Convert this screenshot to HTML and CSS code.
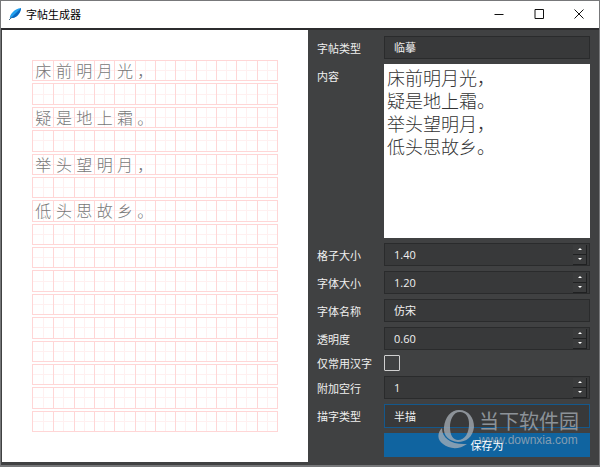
FILE: index.html
```html
<!DOCTYPE html>
<html lang="zh-CN">
<head>
    <meta charset="UTF-8">
    <meta name="viewport" content="width=device-width, initial-scale=1.0">
    <title>字帖生成器</title>
    <link rel="stylesheet" href="styles.css">
</head>
<body>
    <div class="window">
        <header class="titlebar">
            <svg class="logo" viewBox="0 0 14 14" width="14" height="14">
                <path d="M2 12 C1 8 6 2 13 1 C13 5 9 11 4 11 Z" fill="#22a0ee"/>
                <path d="M3 11 C6 8 10 4 13 1 C13 5 9 11 4 11 Z" fill="#0a67be"/>
                <path d="M1 13 L4 10" stroke="#4a6b88" stroke-width="1"/>
            </svg>
            <h1>字帖生成器</h1>
            <button class="win-btn" aria-label="最小化">
                <svg viewBox="0 0 10 10" width="10" height="10"><path d="M0.5 5.5H9.5"/></svg>
            </button>
            <button class="win-btn" aria-label="最大化">
                <svg viewBox="0 0 10 10" width="10" height="10"><path d="M1 0.5H9.5V9.5H1Z"/></svg>
            </button>
            <button class="win-btn" aria-label="关闭">
                <svg viewBox="0 0 10 10" width="10" height="10"><path d="M0.5 0.5L9.5 9.5M9.5 0.5L0.5 9.5"/></svg>
            </button>
        </header>

        <main class="main">
            <section class="sheet" id="sheet"></section>

            <form class="panel" id="form">
                <label for="type">字帖类型</label>
                <select id="type" class="field"><option>临摹</option></select>

                <label for="content" class="top">内容</label>
                <textarea id="content" spellcheck="false">床前明月光，
疑是地上霜。
举头望明月，
低头思故乡。</textarea>

                <label for="gridSize">格子大小</label>
                <div class="field spin">
                    <input type="number" id="gridSize" value="1.40" step="0.1">
                    <div class="arrows"><button type="button" class="up" aria-label="增加"></button><button type="button" class="down" aria-label="减少"></button></div>
                </div>

                <label for="fontSize">字体大小</label>
                <div class="field spin">
                    <input type="number" id="fontSize" value="1.20" step="0.1">
                    <div class="arrows"><button type="button" class="up" aria-label="增加"></button><button type="button" class="down" aria-label="减少"></button></div>
                </div>

                <label for="fontName">字体名称</label>
                <select id="fontName" class="field"><option>仿宋</option></select>

                <label for="opacity">透明度</label>
                <div class="field spin">
                    <input type="number" id="opacity" value="0.60" step="0.1">
                    <div class="arrows"><button type="button" class="up" aria-label="增加"></button><button type="button" class="down" aria-label="减少"></button></div>
                </div>

                <label for="common">仅常用汉字</label>
                <input type="checkbox" id="common" class="check">

                <label for="blank">附加空行</label>
                <div class="field spin">
                    <input type="number" id="blank" value="1">
                    <div class="arrows"><button type="button" class="up" aria-label="增加"></button><button type="button" class="down" aria-label="减少"></button></div>
                </div>

                <label for="trace">描字类型</label>
                <select id="trace" class="field active"><option>半描</option></select>

                <button type="button" class="save"><span>保存为</span></button>
            </form>
        </main>

        <div class="watermark">
            <svg viewBox="0 0 38 40" width="38" height="40">
                <path fill-rule="evenodd" d="M22 1 C32 1 37 9 37 18 C36 28 29 33 21 33 C12 32 6 27 7 18 C8 8 14 1 22 1 Z M23 3 C16 3 13 11 13 18 C13 26 16 31 21 31 C28 31 32 24 32 15 C32 8 29 3 23 3 Z"/>
                <path d="M5 19 C5 29 14 36 30 35 C22 41 12 40 6 35 C0 31 0 24 5 19 Z"/>
            </svg>
            <div>
                <div class="mark-name">当下软件园</div>
                <div class="mark-url">www.downxia.com</div>
            </div>
        </div>
    </div>

    <script>
        const ROWS = 16;
        const COLS = 12;
        const sheet = document.getElementById('sheet');
        const content = document.getElementById('content');
        const blank = document.getElementById('blank');

        // 每行文字后面附加空行
        function draw() {
            const lines = content.value.split('\n');
            const step = Number(blank.value) + 1;
            sheet.innerHTML = '';
            for (let r = 0; r < ROWS; r++) {
                const text = r % step === 0 ? (lines[r / step] || '') : '';
                const row = document.createElement('div');
                row.className = 'row';
                for (let c = 0; c < COLS; c++) {
                    const cell = document.createElement('span');
                    cell.className = 'cell';
                    cell.textContent = text[c] || '';
                    row.appendChild(cell);
                }
                sheet.appendChild(row);
            }
        }

        document.querySelectorAll('.spin').forEach((spin) => {
            const input = spin.querySelector('input');
            const change = (dir) => {
                const step = Number(input.step) || 1;
                const digits = input.step ? 2 : 0;
                input.value = Math.max(0, Number(input.value) + dir * step).toFixed(digits);
                draw();
            };
            spin.querySelector('.up').addEventListener('click', () => change(1));
            spin.querySelector('.down').addEventListener('click', () => change(-1));
        });

        content.addEventListener('input', draw);
        blank.addEventListener('input', draw);
        draw();
    </script>
</body>
</html>
```

FILE: styles.css
```css
* {
    box-sizing: border-box;
}
body {
    margin: 0;
    font-family: "Open Sans", "Noto Sans CJK SC", sans-serif;
    font-size: 11px;
    color: #f0f0f0;
    background-color: #404142;
}
button, input, select, textarea {
    font: inherit;
    color: inherit;
    margin: 0;
}
.window {
    position: relative;
    display: flex;
    flex-direction: column;
    height: 100vh;
    border: 1px solid #77787a;
    border-bottom-width: 2px;
}
.titlebar {
    display: flex;
    align-items: center;
    height: 27px;
    padding-left: 7px;
    background-color: #fff;
    color: #000;
}
.titlebar h1 {
    flex: 1;
    margin: 0 0 2px 4px;
    font-size: 11px;
    font-weight: normal;
}
.logo {
    margin-bottom: 2px;
}
.win-btn {
    display: flex;
    align-items: center;
    justify-content: center;
    width: 40px;
    height: 25px;
    margin-bottom: 2px;
    padding: 0;
    border: none;
    background: none;
}
.win-btn svg {
    fill: none;
    stroke: #111;
    stroke-width: 1;
}
.main {
    flex: 1;
    min-height: 0;
    display: grid;
    grid-template-columns: 307fr 291fr;
    border-top: 2px solid #2c2c2e;
}
.sheet {
    display: flex;
    flex-direction: column;
    gap: 2px;
    margin: 0 0 3px 1px;
    padding: 30px;
    background-color: #fff;
}
.row {
    flex: 1;
    min-height: 0;
    display: grid;
    grid-template-columns: repeat(12, 1fr);
    border: 1px solid #ffd6d6;
}
.cell {
    display: flex;
    align-items: center;
    justify-content: center;
    min-width: 0;
    color: #777;
    font-family: "Noto Sans CJK SC", sans-serif;
    font-size: 16px;
    font-weight: 300;
    line-height: 19px;
    background-image: linear-gradient(#fff0f0, #fff0f0), linear-gradient(#fff0f0, #fff0f0);
    background-size: 1px 100%, 100% 1px;
    background-position: center;
    background-repeat: no-repeat;
}
.cell + .cell {
    border-left: 1px solid #ffd6d6;
}
.panel {
    display: grid;
    grid-template-columns: 67px 1fr;
    grid-template-rows: 23px 1fr repeat(4, 23px) 16px 23px 24px 24px;
    gap: 5px 0;
    align-items: center;
    padding: 6px 9px 8px;
}
.panel label {
    white-space: nowrap;
}
.panel .top {
    align-self: start;
    padding-top: 4px;
}
.field {
    width: 100%;
    height: 100%;
    padding: 0 9px;
    border: 1px solid #2a2b2c;
    border-radius: 0;
    background-color: #38393a;
    appearance: none;
    outline: none;
}
.field.active {
    border-color: #14588c;
}
textarea {
    width: 100%;
    height: 100%;
    padding: 1px 2px;
    border: 1px solid #fff;
    background-color: #fff;
    color: #333;
    font-family: "Noto Sans CJK SC", sans-serif;
    font-size: 18px;
    font-weight: 300;
    line-height: 23px;
    resize: none;
    outline: none;
}
.spin {
    display: flex;
    align-items: center;
    padding-right: 2px;
}
.spin input {
    flex: 1;
    min-width: 0;
    padding: 0;
    border: none;
    background: none;
    outline: none;
    appearance: textfield;
}
.spin input::-webkit-inner-spin-button {
    appearance: none;
}
.arrows {
    display: flex;
    flex-direction: column;
    width: 14px;
}
.arrows button {
    display: flex;
    align-items: center;
    justify-content: center;
    height: 10px;
    padding: 0;
    border: solid #202122;
    border-width: 0 1px 1px 0;
    background-color: #3b3c3d;
}
.arrows button::before {
    content: "";
    border: 2px solid transparent;
}
.arrows .up::before {
    border-top: none;
    border-bottom-color: #fff;
}
.arrows .down::before {
    border-bottom: none;
    border-top-color: #fff;
}
.check {
    width: 16px;
    height: 16px;
    border: 1px solid #d0d0d0;
    border-radius: 1px;
    appearance: none;
}
.save {
    grid-column: 2;
    height: 100%;
    padding: 0;
    border: none;
    background-color: #1064a0;
    color: #fff;
}
/* 按钮文字在水印上面 */
.save span {
    position: relative;
    z-index: 2;
}
/* 水印 */
.watermark {
    position: absolute;
    z-index: 1;
    right: 20px;
    bottom: 16px;
    display: flex;
    align-items: center;
    gap: 4px;
    color: #a9b0b8;
    opacity: 0.75;
    pointer-events: none;
}
.watermark svg {
    fill: currentColor;
}
.mark-name {
    font-size: 20px;
    line-height: 22px;
}
.mark-url {
    font-family: "Liberation Sans", sans-serif;
    font-size: 12px;
    line-height: 14px;
}
```
